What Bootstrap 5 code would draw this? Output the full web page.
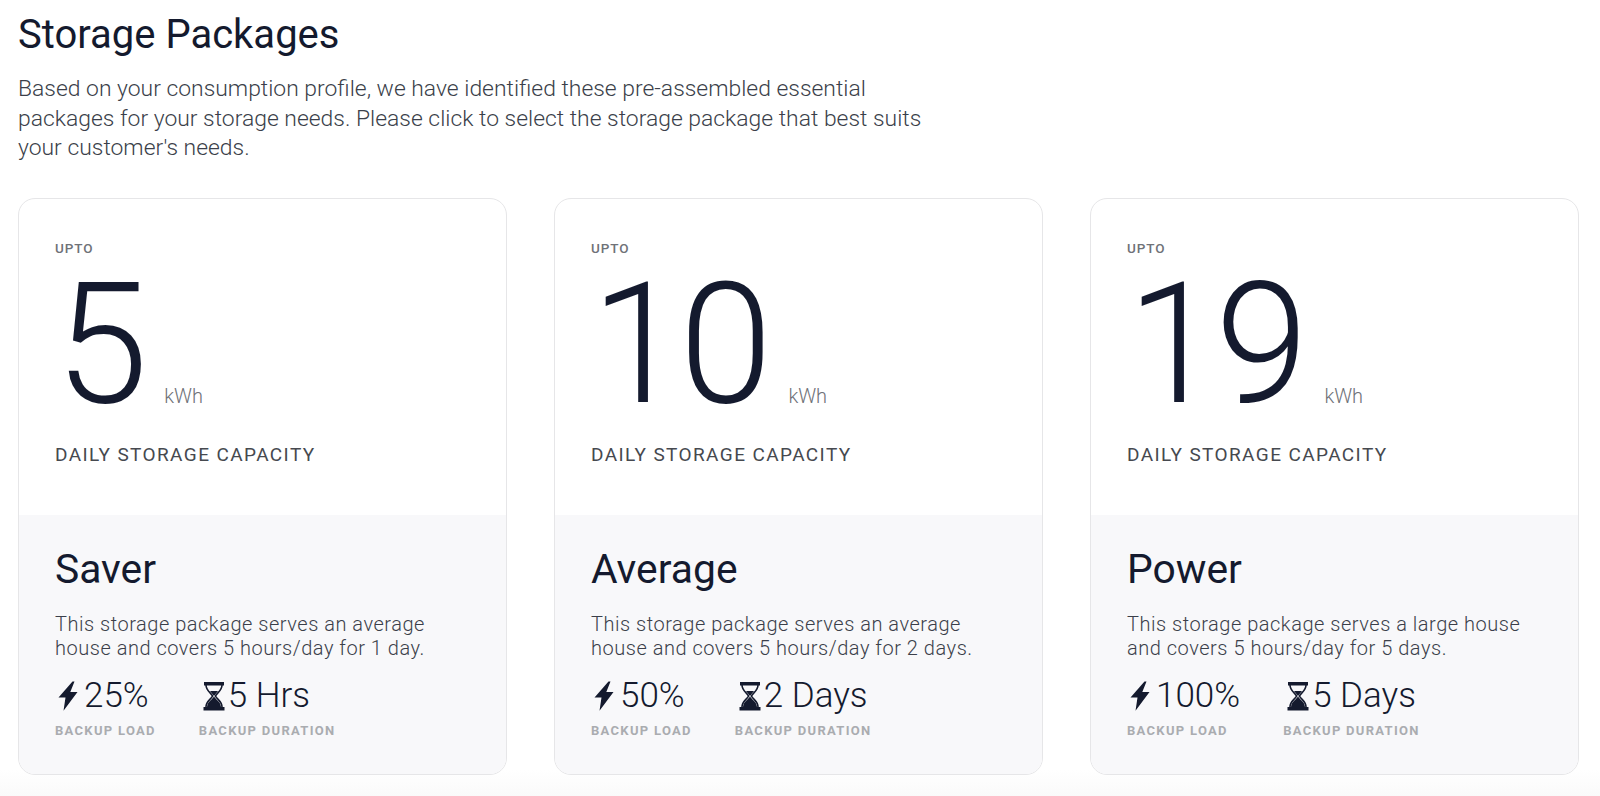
<!DOCTYPE html>
<html lang="en">
<head>
<meta charset="utf-8">
<link href="https://cdn.jsdelivr.net/npm/bootstrap@5.3.0/dist/css/bootstrap.min.css" rel="stylesheet">
<style>
html,body{height:100%}
body{font-family:Roboto,"Liberation Sans",sans-serif;color:#141a2e;background:linear-gradient(#fff 770px,#fafafa 796px);overflow:hidden}
.page-wrap{padding:0 21px 0 18px}
.page-title{font-size:40px;font-weight:400;line-height:1;margin:15px 0 0;color:#141a2e}
.page-intro{font-size:22.9px;font-weight:300;line-height:29.5px;width:930px;margin:19px 0 35.5px;color:#3b3f4a}
.pack-row{gap:47px}
.pack-card{flex:1 1 0;height:577px;border:1px solid #e6e6e8;border-radius:17px;overflow:hidden;background:#fff}
.pack-top{height:316px;padding:41.5px 36px 0}
.upto{font-size:13.5px;font-weight:500;letter-spacing:.9px;color:#6f7278;line-height:14px}
.big-row{height:150px;margin-top:15.5px}
.big-num{font-size:168px;font-weight:300;line-height:150px;letter-spacing:-5px}
.unit{font-size:20px;color:#6f7278;font-weight:300;line-height:24px;margin-left:21px;padding-bottom:12px}
.cap{font-size:19px;font-weight:400;letter-spacing:1.4px;color:#46494f;line-height:24px;margin-top:23px}
.pack-bottom{flex:1 1 auto;background:#f8f8fa;padding:31px 36px 0}
.pack-name{font-size:40.8px;font-weight:400;line-height:46px;margin:0 0 20px}
.pack-desc{font-size:20px;font-weight:300;line-height:24px;letter-spacing:.52px;color:#3b3f4a;margin:0 0 17px}
.metric-row{gap:43px}
.metric-val{font-size:35px;font-weight:300;line-height:38px;gap:3px}
.metric-label{font-size:13px;font-weight:700;letter-spacing:1.3px;color:#aaacb0;line-height:14px;margin-top:8.5px}
.ico{flex:none}
</style>
</head>
<body>
<main class="page-wrap">
<h1 class="page-title">Storage Packages</h1>
<p class="page-intro">Based on your consumption profile, we have identified these pre-assembled essential packages for your storage needs. Please click to select the storage package that best suits your customer's needs.</p>
<div class="d-flex pack-row">

<div class="pack-card d-flex flex-column">
<div class="pack-top">
<div class="upto">UPTO</div>
<div class="big-row d-flex align-items-start"><span class="big-num">5</span><span class="unit align-self-end">kWh</span></div>
<div class="cap">DAILY STORAGE CAPACITY</div>
</div>
<div class="pack-bottom">
<h2 class="pack-name">Saver</h2>
<p class="pack-desc">This storage package serves an average house and covers 5 hours/day for 1 day.</p>
<div class="d-flex metric-row">
<div><div class="metric-val d-flex align-items-center"><svg class="ico" width="26" height="30" viewBox="0 0 26 30"><path fill="#141a2e" d="M17.500.5 3.500 16.500h7L8.500 29.800 22.500 11h-7.200L19.500.5z"/></svg>25%</div><div class="metric-label">BACKUP LOAD</div></div>
<div><div class="metric-val d-flex align-items-center"><svg class="ico" width="26" height="30" viewBox="0 0 26 30"><path fill="#141a2e" d="M5 1h20v3.500H5zM4.500 26h21v3.500h-21z"/><path fill="none" stroke="#141a2e" stroke-width="1.600" d="M7 4c0 6 5.500 8 6.500 11-1 3-6.500 5-6.500 11M23 4c0 6-5.500 8-6.500 11 1 3 6.500 5 6.500 11"/><path fill="#141a2e" d="M15 15c-1.500 4-6.500 5-7 11h14c-.5-6-5.500-7-7-11zM11 10h8l-4 5z"/></svg>5 Hrs</div><div class="metric-label">BACKUP DURATION</div></div>
</div>
</div>
</div>

<div class="pack-card d-flex flex-column">
<div class="pack-top">
<div class="upto">UPTO</div>
<div class="big-row d-flex align-items-start"><span class="big-num">10</span><span class="unit align-self-end">kWh</span></div>
<div class="cap">DAILY STORAGE CAPACITY</div>
</div>
<div class="pack-bottom">
<h2 class="pack-name">Average</h2>
<p class="pack-desc">This storage package serves an average house and covers 5 hours/day for 2 days.</p>
<div class="d-flex metric-row">
<div><div class="metric-val d-flex align-items-center"><svg class="ico" width="26" height="30" viewBox="0 0 26 30"><path fill="#141a2e" d="M17.500.5 3.500 16.500h7L8.500 29.800 22.500 11h-7.200L19.500.5z"/></svg>50%</div><div class="metric-label">BACKUP LOAD</div></div>
<div><div class="metric-val d-flex align-items-center"><svg class="ico" width="26" height="30" viewBox="0 0 26 30"><path fill="#141a2e" d="M5 1h20v3.500H5zM4.500 26h21v3.500h-21z"/><path fill="none" stroke="#141a2e" stroke-width="1.600" d="M7 4c0 6 5.500 8 6.500 11-1 3-6.500 5-6.500 11M23 4c0 6-5.500 8-6.500 11 1 3 6.500 5 6.500 11"/><path fill="#141a2e" d="M15 15c-1.500 4-6.500 5-7 11h14c-.5-6-5.500-7-7-11zM11 10h8l-4 5z"/></svg>2 Days</div><div class="metric-label">BACKUP DURATION</div></div>
</div>
</div>
</div>

<div class="pack-card d-flex flex-column">
<div class="pack-top">
<div class="upto">UPTO</div>
<div class="big-row d-flex align-items-start"><span class="big-num">19</span><span class="unit align-self-end">kWh</span></div>
<div class="cap">DAILY STORAGE CAPACITY</div>
</div>
<div class="pack-bottom">
<h2 class="pack-name">Power</h2>
<p class="pack-desc">This storage package serves a large house and covers 5 hours/day for 5 days.</p>
<div class="d-flex metric-row">
<div><div class="metric-val d-flex align-items-center"><svg class="ico" width="26" height="30" viewBox="0 0 26 30"><path fill="#141a2e" d="M17.500.5 3.500 16.500h7L8.500 29.800 22.500 11h-7.200L19.500.5z"/></svg>100%</div><div class="metric-label">BACKUP LOAD</div></div>
<div><div class="metric-val d-flex align-items-center"><svg class="ico" width="26" height="30" viewBox="0 0 26 30"><path fill="#141a2e" d="M5 1h20v3.500H5zM4.500 26h21v3.500h-21z"/><path fill="none" stroke="#141a2e" stroke-width="1.600" d="M7 4c0 6 5.500 8 6.500 11-1 3-6.500 5-6.500 11M23 4c0 6-5.500 8-6.500 11 1 3 6.500 5 6.500 11"/><path fill="#141a2e" d="M15 15c-1.500 4-6.500 5-7 11h14c-.5-6-5.500-7-7-11zM11 10h8l-4 5z"/></svg>5 Days</div><div class="metric-label">BACKUP DURATION</div></div>
</div>
</div>
</div>

</div>
</main>
<script src="https://cdn.jsdelivr.net/npm/bootstrap@5.3.0/dist/js/bootstrap.bundle.min.js"></script>
</body>
</html>
